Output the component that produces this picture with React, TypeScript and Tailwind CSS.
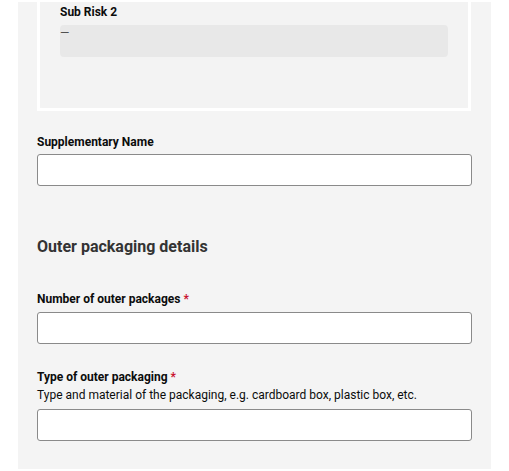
type FieldProps = {
  label: string;
  required?: boolean;
  hint?: string;
};

function Field({ label, required, hint }: FieldProps) {
  return (
    <div>
      <label className={`block text-[12px] leading-[16px] font-bold text-[#0b0c0c] ${hint ? "mb-[2px]" : "mb-[5px]"}`}>
        {label}
        {required && <span className="text-[#c8102e]"> *</span>}
      </label>
      {hint && <p className="text-[12px] leading-[16px] text-[#0b0c0c] mb-[6px]">{hint}</p>}
      <input
        type="text"
        className="block w-[435px] h-[32px] bg-white border border-[#8a8a8a] rounded-[3px] px-2 text-[12px] outline-none"
      />
    </div>
  );
}

export default function App() {
  return (
    <div className="min-h-[471px] w-[509px] bg-white pt-[2px] pl-[18px] font-['Roboto',sans-serif]">
      <div className="w-[473px] h-[467px] bg-[#f4f4f4] px-[19px]">
        <div className="w-[434px] border-x-[3px] border-b-[3px] border-white">
          <div className="bg-[#f3f3f3] rounded-b-[4px] px-[20px] pt-[2px] pb-[51px]">
            <div className="text-[12px] leading-[16px] font-bold text-[#0b0c0c]">Sub Risk 2</div>
            <div className="mt-[5px] h-[32px] bg-[#e8e8e8] rounded-[4px] text-[12px] leading-[16px] text-[#505050]">—</div>
          </div>
        </div>

        <div className="mt-[23px] [&_label]:mb-[4px]">
          <Field label="Supplementary Name" />
        </div>

        <h2 className="mt-[49px] text-[16px] leading-[24px] font-bold text-[#333333]">Outer packaging details</h2>

        <div className="mt-[32px]">
          <Field label="Number of outer packages" required />
        </div>

        <div className="mt-[25px]">
          <Field
            label="Type of outer packaging"
            required
            hint="Type and material of the packaging, e.g. cardboard box, plastic box, etc."
          />
        </div>
      </div>
    </div>
  );
}
